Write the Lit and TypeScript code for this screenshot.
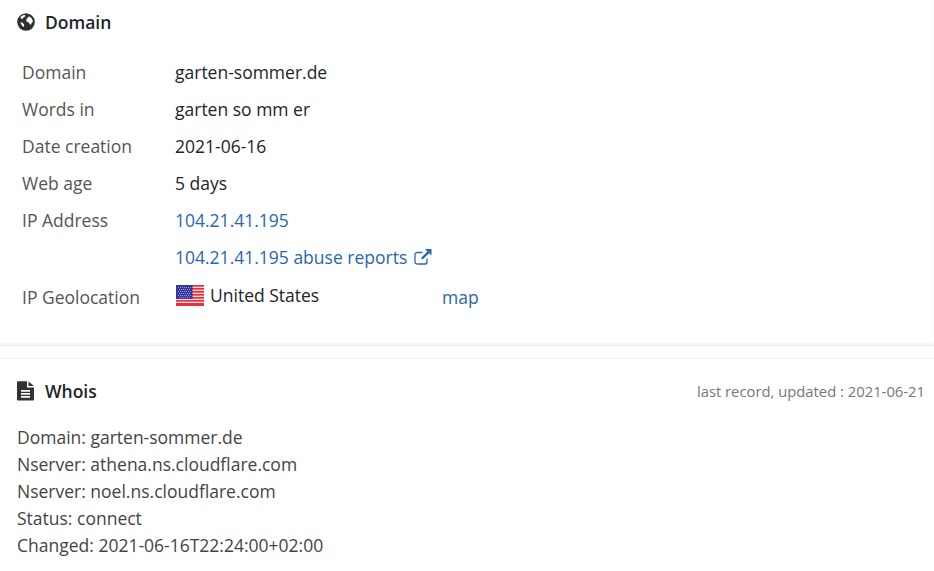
import { LitElement, html, css, svg } from "lit";
import { customElement } from "lit/decorators.js";

const stripes = [0, 3, 6, 9, 12, 15, 18];
const dots: number[][] = [];
for (let y = 2; y < 13; y += 2) for (let x = 2 + (y % 4 === 0 ? 1 : 0); x < 15; x += 2) dots.push([x, y]);

@customElement("app-root")
export class AppRoot extends LitElement {
  static styles = css`
    :host { display: block; width: 934px; height: 571px; overflow: hidden; background: #fff; font-family: "Open Sans", sans-serif; font-size: 17.5px; color: #212529; }
    * { box-sizing: border-box; }
    a { color: #2a66ad; text-decoration: none; }
    .head { display: flex; align-items: center; height: 24px; padding-left: 17px; font-weight: 600; color: #212529; }
    .head svg { flex: none; display: block; }
    .head span { margin-left: 10px; }
    .domain { padding-top: 10px; height: 346px; border-bottom: 1px solid #eee; box-shadow: 0 -2px 2px #f6f6f6 inset; }
    .rows { display: grid; grid-template-columns: 153px 1fr; grid-auto-rows: 37px; padding: 19px 0 0 22px; align-items: center; line-height: 24px; }
    .k { color: #555; }
    .ext { display: inline-block; vertical-align: -2px; margin-left: 2px; }
    .geo { display: grid; grid-template-columns: 153px 267px 1fr; padding: 10px 0 0 22px; line-height: 24px; height: 40px; }
    .country { display: flex; align-items: center; height: 20px; padding-left: 1px; }
    .country svg { margin-right: 6px; }
    .gap { height: 13px; border-bottom: 1px solid #eee; }
    .whois { padding-top: 20px; }
    .note { margin-left: auto !important; padding-right: 9px; font-size: 14.8px; font-weight: 400; color: #777; }
    .text { padding: 21px 0 0 17px; line-height: 27px; color: #444; }
  `;

  render() {
    return html`
      <section class="domain">
        <div class="head">
          <svg width="18" height="18" viewBox="0 0 18 18" aria-hidden="true">
            <circle cx="9" cy="9" r="8.800" fill="#2f2f2f"/>
            <path d="M4 3.400 7.200 1.700 8.600 3 7.200 4 5 6 3.400 5Z M9.800 5.700 12 3.200 14.800 5.500 16 8.500 14.500 10 14 12 11.500 9.500 9 8Z M3.200 9.200 5.500 9.700 7.200 11.500 6.800 14 5 12.800Z" fill="#fff"/>
          </svg>
          <span>Domain</span>
        </div>
        <div class="rows">
          <div class="k">Domain</div><div>garten-sommer.de</div>
          <div class="k">Words in</div><div>garten so mm er</div>
          <div class="k">Date creation</div><div>2021-06-16</div>
          <div class="k">Web age</div><div>5 days</div>
          <div class="k">IP Address</div><div><a href="#">104.21.41.195</a></div>
          <div></div>
          <div>
            <a href="#">104.21.41.195 abuse reports
              <svg class="ext" width="18" height="18" viewBox="0 0 18 18" aria-hidden="true">
                <path d="M13 10.500V14A2 2 0 0 1 11 16H3A2 2 0 0 1 1 14V6.500A2 2 0 0 1 3 4.500H8.500" fill="none" stroke="#2a66ad" stroke-width="1.300"/>
                <path d="M11 1H17.500V7.500L15.200 5.200 8.600 11.600 7 10 13.400 3.400Z" fill="#2a66ad"/>
              </svg>
            </a>
          </div>
        </div>
        <div class="geo">
          <div class="k">IP Geolocation</div>
          <div class="country">
            <svg width="28" height="21" viewBox="0 0 28 21" aria-hidden="true">
              <rect width="28" height="21" fill="#fdd"/>
              ${stripes.map((y) => svg`<rect y="${y}" width="28" height="1.700" fill="#e8303a"/>`)}
              <rect y="19" width="28" height="2" fill="#e8303a"/>
              <rect width="16.500" height="14" fill="#33389a"/>
              ${dots.map(([x, y]) => svg`<rect x="${x}" y="${y}" width="1" height="1" fill="#8f93d8"/>`)}
            </svg>
            United States
          </div>
          <div><a href="#">map</a></div>
        </div>
      </section>
      <div class="gap"></div>
      <section class="whois">
        <div class="head">
          <svg width="18" height="20" viewBox="0 0 18 20" aria-hidden="true">
            <path d="M0 1.200A1 1 0 0 1 1 .2H10V6.500H17V18.500A1 1 0 0 1 16 19.500H1A1 1 0 0 1 0 18.500Z" fill="#333"/>
            <path d="M11.500 .4 17 5H11.500Z" fill="#333"/>
            <path d="M4 9H13V10.700H4ZM4 12H13V13.700H4ZM4 15H13V16.700H4Z" fill="#fff"/>
          </svg>
          <span>Whois</span>
          <span class="note">last record, updated : 2021-06-21</span>
        </div>
        <div class="text">
          Domain: garten-sommer.de<br>
          Nserver: athena.ns.cloudflare.com<br>
          Nserver: noel.ns.cloudflare.com<br>
          Status: connect<br>
          Changed: 2021-06-16T22:24:00+02:00
        </div>
      </section>
    `;
  }
}
